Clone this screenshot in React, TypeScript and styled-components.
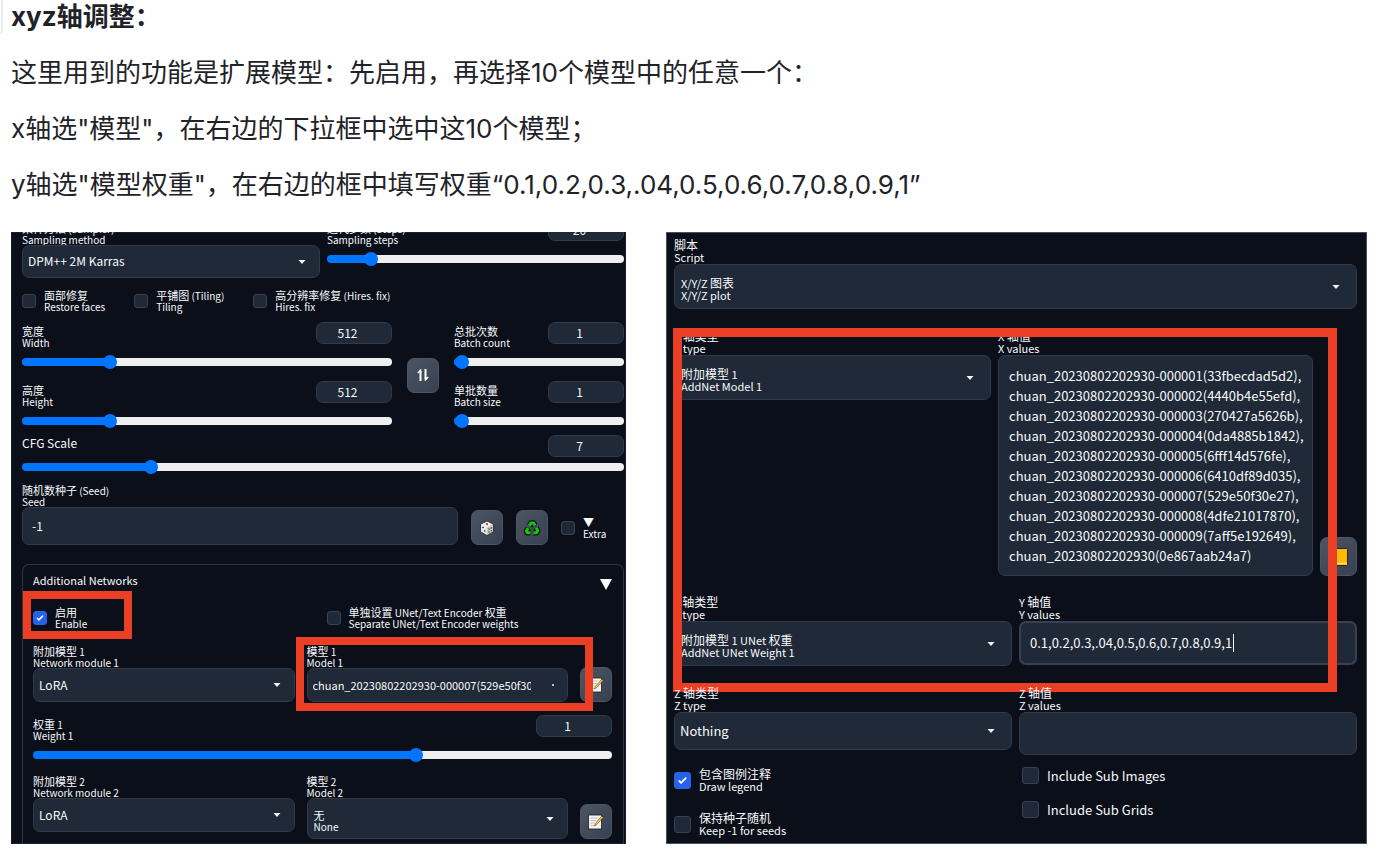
import React, { useId } from "react";
import styled, { createGlobalStyle, css } from "styled-components";

const GlobalStyle = createGlobalStyle`
  *, *::before, *::after { box-sizing: border-box; }
  body {
    margin: 0;
    background: #fff;
    color: #1f2329;
    font-family: Inter, "Noto Sans CJK SC", sans-serif;
  }
  button, input, select, textarea { font: inherit; color: inherit; margin: 0; }
`;

const uiFont = `"Noto Sans CJK SC", sans-serif`;

/* ---------- article ---------- */

const Article = styled.main`
  position: relative;
  padding: 0 17px 11px 11px;
`;

const EdgeTab = styled.span`
  position: absolute;
  left: 0;
  top: 0;
  width: 3px;
  height: 34px;
  border-right: 2px solid #e9eaeb;
  border-bottom-right-radius: 4px;
`;

const Copy = styled.div`
  display: flex;
  flex-direction: column;
  gap: 22px;
  margin-bottom: 30px;
  font-size: 26px;
  line-height: 34px;
`;

const Title = styled.h3`
  margin: 0;
  font-size: 26px;
  font-weight: 700;
`;

const Paragraph = styled.p`
  margin: 0;
`;

const Figures = styled.div`
  display: grid;
  grid-template-columns: 615fr 701fr;
  gap: 40px;
`;

/* ---------- panel ---------- */

const Panel = styled.section<{ $large?: boolean }>`
  position: relative;
  overflow: hidden;
  background: #0b0f19;
  color: #f8f9fb;
  font-family: ${uiFont};
  font-size: ${(p) => (p.$large ? 13 : 12)}px;
  line-height: 16px;
  box-shadow: inset 0 0 0 1px ${(p) => (p.$large ? "#4b4f58" : "#1b1f29")};
  padding: ${(p) => (p.$large ? "6px 10px 0 8px" : "0 2px 0 11px")};
  --zh: ${(p) => (p.$large ? 12 : 11)}px;
  --en: ${(p) => (p.$large ? 11 : 10)}px;
  --lh: ${(p) => (p.$large ? 13 : 11)}px;
  --box: ${(p) => (p.$large ? 17 : 14)}px;
  --arrow: ${(p) => (p.$large ? 16 : 13)}px;
`;

const Stack = styled.div<{ $gap: number }>`
  display: flex;
  flex-direction: column;
  gap: ${(p) => p.$gap}px;
`;

const Columns = styled.div<{ $cols: string; $gap: number }>`
  position: relative;
  display: grid;
  grid-template-columns: ${(p) => p.$cols};
  gap: ${(p) => p.$gap}px;
  align-items: start;
`;

const LabelLine = styled.span<{ $latin?: boolean }>`
  display: block;
  white-space: nowrap;
  height: var(--lh);
  line-height: var(--lh);
  font-size: ${(p) => (p.$latin ? "var(--en)" : "var(--zh)")};
`;

const Latin = styled.span`
  font-size: var(--en);
`;

function TwoLine({ zh, en }: { zh: string; en: string }) {
  return (
    <>
      <LabelLine>
        {zh.split(/([\x20-\x7e]+)/).map((part, i) =>
          /^[\x20-\x7e]+$/.test(part) ? <Latin key={i}>{part}</Latin> : part
        )}
      </LabelLine>
      <LabelLine $latin>{en}</LabelLine>
    </>
  );
}

const FieldLabel = styled.label`
  display: block;
`;

const surface = css`
  background: #1f2937;
  border: 1px solid #303a49;
  border-radius: 7px;
`;

/* ---------- select ---------- */

const SelectBox = styled.div<{ $h: number }>`
  ${surface}
  position: relative;
  display: flex;
  align-items: center;
  height: ${(p) => p.$h}px;
`;

const NativeSelect = styled.select<{ $long?: boolean }>`
  appearance: none;
  width: 100%;
  height: 100%;
  padding: 0 ${(p) => (p.$long ? 36 : 34)}px 1px 5px;
  border: 0;
  background: transparent;
  outline: 0;
  white-space: nowrap;
  overflow: hidden;
  ${(p) => p.$long && css`font-size: 11px;`}
`;

const SelectedText = styled.span`
  position: absolute;
  left: 6px;
  padding-top: 4px;
  pointer-events: none;
`;

const Caret = styled.svg`
  position: absolute;
  right: var(--arrow);
  width: 8px;
  height: 4px;
  fill: #f3f4f6;
  pointer-events: none;
`;

type SelectProps = { zh: string; en: string; h: number; value?: string; two?: [string, string]; long?: boolean };

function SelectField({ zh, en, h, value, two, long }: SelectProps) {
  const id = useId();
  return (
    <div>
      <FieldLabel htmlFor={id}>
        <TwoLine zh={zh} en={en} />
      </FieldLabel>
      <SelectBox $h={h}>
        <NativeSelect id={id} $long={long}>
          {two ? <option aria-label={two[1]} /> : <option>{value}</option>}
        </NativeSelect>
        {two && (
          <SelectedText>
            <TwoLine zh={two[0]} en={two[1]} />
          </SelectedText>
        )}
        {long ? (
          <Caret viewBox="0 0 8 4">
            <circle cx="7" cy="2" r="1" />
          </Caret>
        ) : (
          <Caret viewBox="0 0 8 4">
            <path d="M0.500 0h7L4 4z" />
          </Caret>
        )}
      </SelectBox>
    </div>
  );
}

/* ---------- slider ---------- */

const SliderHead = styled.div`
  display: flex;
  justify-content: space-between;
  align-items: flex-start;
`;

const SliderLabel = styled.label<{ $single?: boolean }>`
  padding-top: ${(p) => (p.$single ? 0 : 4)}px;
`;

const NumberBox = styled.input`
  ${surface}
  width: 76px;
  height: 22px;
  padding: 0 13px 1px 0;
  text-align: center;
  appearance: textfield;
  &::-webkit-inner-spin-button { appearance: none; }
`;

const Range = styled.input<{ $fill: number; $top: number }>`
  appearance: none;
  display: block;
  width: 100%;
  height: 14px;
  margin-top: ${(p) => p.$top}px;
  background: transparent;
  &::-webkit-slider-runnable-track {
    height: 8px;
    border: 1px solid transparent;
    border-radius: 4px;
    background: linear-gradient(to right, #0075ff ${(p) => p.$fill}%, #efefef ${(p) => p.$fill}%) border-box;
  }
  &::-webkit-slider-thumb {
    appearance: none;
    width: 14px;
    height: 14px;
    margin-top: -4px;
    border-radius: 50%;
    background: #0075ff;
  }
`;

type SliderProps = { zh?: string; en: string; min: number; max: number; value: number };

function SliderField({ zh, en, min, max, value }: SliderProps) {
  const id = useId();
  const fill = ((value - min) / (max - min)) * 100;
  return (
    <div>
      <SliderHead>
        <SliderLabel htmlFor={id} $single={!zh}>
          {zh ? <TwoLine zh={zh} en={en} /> : en}
        </SliderLabel>
        <NumberBox type="number" aria-label={en} defaultValue={value} />
      </SliderHead>
      <Range
        id={id}
        type="range"
        min={min}
        max={max}
        defaultValue={value}
        $fill={Math.max(fill, 3)}
        $top={zh ? 7 : 3}
      />
    </div>
  );
}

/* ---------- checkbox ---------- */

const CheckLabel = styled.label`
  display: flex;
  align-items: center;
  gap: 8px;
  white-space: nowrap;
`;

const CheckInput = styled.input`
  appearance: none;
  flex: none;
  width: var(--box);
  height: var(--box);
  border: 1px solid #374151;
  border-radius: 3px;
  background: #1f2937;
  &:checked {
    border-color: #2563eb;
    background: #2563eb
      url("data:image/svg+xml,%3Csvg viewBox='0 0 16 16' fill='white' xmlns='http://www.w3.org/2000/svg'%3E%3Cpath d='M12.2 4.8a1 1 0 0 1 0 1.4l-5 5a1 1 0 0 1-1.4 0l-2-2a1 1 0 0 1 1.4-1.4L6.5 9.1l4.3-4.3a1 1 0 0 1 1.4 0z'/%3E%3C/svg%3E");
  }
`;

function Check({ zh, en, checked }: { zh?: string; en: string; checked?: boolean }) {
  return (
    <CheckLabel>
      <CheckInput type="checkbox" defaultChecked={checked} />
      <span>{zh ? <TwoLine zh={zh} en={en} /> : en}</span>
    </CheckLabel>
  );
}

const CheckRow = styled.div`
  display: flex;
  gap: 29px;
`;

/* ---------- buttons and icons ---------- */

const ToolButton = styled.button<{ $large?: boolean }>`
  display: flex;
  align-items: center;
  justify-content: center;
  width: ${(p) => (p.$large ? 37 : 32)}px;
  height: ${(p) => (p.$large ? 39 : 35)}px;
  padding: 0;
  border: 1px solid #4b5563;
  border-radius: 7px;
  background: linear-gradient(to bottom right, #4b5563, #374151);
`;

const EndButton = styled(ToolButton)`
  align-self: end;
`;

const CenterButton = styled(ToolButton)`
  align-self: center;
`;

const SwapIcon = () => (
  <svg width="14" height="12" viewBox="0 0 14 12" fill="none" stroke="#fff" strokeWidth="2" aria-hidden>
    <path d="M4.500 12V2M9.500 0v10" />
    <path d="M1.800 4l2.700-2.800V4M12.200 8L9.500 10.800V8" strokeWidth="1.500" />
  </svg>
);

const DiceIcon = () => (
  <svg width="16" height="16" viewBox="0 0 16 16" aria-hidden>
    <path d="M8 1l6 3v7.500l-6 3.500-6-3.500V4z" fill="#f4f4f4" stroke="#222" strokeWidth="0.800" />
    <path d="M8 7.500l6-3.500v7.500L8 15z" fill="#c9c9c9" />
    <path d="M8 7.500L2 4v7.500L8 15z" fill="#e6e6e6" />
    <circle cx="8" cy="4.200" r="1.100" fill="#d4283a" />
    <circle cx="4" cy="7.500" r="0.800" fill="#222" />
    <circle cx="5.800" cy="11" r="0.800" fill="#222" />
    <circle cx="10" cy="9" r="0.700" fill="#222" />
    <circle cx="12.300" cy="8" r="0.700" fill="#222" />
    <circle cx="10" cy="12" r="0.700" fill="#222" />
    <circle cx="12.300" cy="10.600" r="0.700" fill="#222" />
  </svg>
);

const RecycleIcon = () => (
  <svg width="18" height="18" viewBox="0 0 18 18" fill="none" aria-hidden>
    <g stroke="#071507" strokeWidth="5.500" strokeLinejoin="round">
      <path d="M6.200 6.800L8 4h2.500L12 6.500" />
      <path d="M13.200 8.800l1.600 3-1.300 2H10.500" />
      <path d="M7.500 13.800H4.300L3.400 12 5 9.200" />
    </g>
    <g stroke="#16c60c" strokeWidth="3" strokeLinejoin="round">
      <path d="M6.200 6.800L8 4h2.500L12 6.500" />
      <path d="M13.200 8.800l1.600 3-1.300 2H10.500" />
      <path d="M7.500 13.800H4.300L3.400 12 5 9.200" />
    </g>
  </svg>
);

const MemoIcon = () => (
  <svg width="18" height="18" viewBox="0 0 18 18" aria-hidden>
    <path d="M1.500 2h13v14h-13z" fill="#f3f3f3" stroke="#1b1b1b" strokeWidth="0.800" />
    <path d="M3.500 5h7M3.500 7.500h6M3.500 10h4M3.500 12.500h4" stroke="#b9b9b9" strokeWidth="0.900" />
    <path d="M7.500 13l0.800-2.500L14.800 3l1.500 1.200L9.800 11.600z" fill="#f3c04a" stroke="#4a3a10" strokeWidth="0.500" />
    <path d="M14.500 3l1-1 2 1.500-1 1.100z" fill="#3c3c3c" />
  </svg>
);

const NoteIcon = () => (
  <svg width="18" height="18" viewBox="0 0 18 18" aria-hidden>
    <rect x="0.500" y="0.500" width="17" height="17" rx="1" fill="#ffb900" stroke="#2b2410" />
    <path d="M1 15.500h16" stroke="#ffe08a" strokeWidth="1.500" />
  </svg>
);

/* ---------- red frames drawn over the screenshots ---------- */

const Frame = styled.span<{ $inset: string; $w: number }>`
  position: absolute;
  inset: ${(p) => p.$inset};
  border: ${(p) => p.$w}px solid #ea3f24;
  pointer-events: none;
`;

const Framed = styled.div`
  position: relative;
`;

const FramedCheck = styled.div`
  position: relative;
  width: 84px;
`;

/* ---------- left panel ---------- */

const LeftBody = styled.div`
  margin-top: -13px;
`;

const Pad = styled.div<{ $top: number }>`
  padding-top: ${(p) => p.$top}px;
`;

const SeedRow = styled.div`
  display: flex;
  align-items: flex-end;
  gap: 13px;
`;

const SeedField = styled.div`
  flex: 1;
`;

const TextInput = styled.input<{ $h: number; $active?: boolean }>`
  ${surface}
  display: block;
  width: 100%;
  height: ${(p) => p.$h}px;
  padding: 0 9px 2px;
  outline: 0;
  ${(p) => p.$active && css`border: 2px solid #374151;`}
`;

const SeedTools = styled.div`
  display: flex;
  align-items: center;
  gap: 13px;
  width: 153px;
`;

const Accordion = styled.div`
  margin-top: 19px;
  padding: 7px 11px 5px 10px;
  border: 1px solid #2f3643;
  border-bottom: 0;
  border-radius: 7px 7px 0 0;
`;

const AccordionHead = styled.button`
  display: flex;
  justify-content: space-between;
  width: 100%;
  height: 18px;
  padding: 0;
  border: 0;
  background: none;
  font-size: 11px;
`;

const Triangle = styled.svg`
  align-self: flex-end;
  width: 12px;
  height: 11px;
  fill: #fff;
`;

function GenerationPanel() {
  const seedId = useId();
  return (
    <Panel>
      <LeftBody>
        <Columns $cols="298fr 297fr" $gap={7}>
          <Pad $top={4}>
            <SelectField zh="采样方法 (Sampler)" en="Sampling method" value="DPM++ 2M Karras" h={33} />
          </Pad>
          <SliderField zh="迭代步数 (Steps)" en="Sampling steps" min={1} max={150} value={20} />
        </Columns>
        <Pad $top={12}>
          <CheckRow>
            <Check zh="面部修复" en="Restore faces" />
            <Check zh="平铺图 (Tiling)" en="Tiling" />
            <Check zh="高分辨率修复 (Hires. fix)" en="Hires. fix" />
          </CheckRow>
        </Pad>
        <Pad $top={10}>
          <Columns $cols="370fr 32px 170fr" $gap={15}>
            <Stack $gap={12}>
              <SliderField zh="宽度" en="Width" min={64} max={2048} value={512} />
              <SliderField zh="高度" en="Height" min={64} max={2048} value={512} />
            </Stack>
            <CenterButton aria-label="Swap width and height">
              <SwapIcon />
            </CenterButton>
            <Stack $gap={12}>
              <SliderField zh="总批次数" en="Batch count" min={1} max={100} value={1} />
              <SliderField zh="单批数量" en="Batch size" min={1} max={8} value={1} />
            </Stack>
          </Columns>
        </Pad>
        <Pad $top={7}>
          <SliderField en="CFG Scale" min={1} max={30} value={7} />
        </Pad>
        <Pad $top={11}>
          <SeedRow>
            <SeedField>
              <FieldLabel htmlFor={seedId}>
                <TwoLine zh="随机数种子 (Seed)" en="Seed" />
              </FieldLabel>
              <TextInput id={seedId} $h={38} defaultValue="-1" />
            </SeedField>
            <SeedTools>
              <ToolButton aria-label="Random seed">
                <DiceIcon />
              </ToolButton>
              <ToolButton aria-label="Reuse seed">
                <RecycleIcon />
              </ToolButton>
              <Check zh="▼" en="Extra" />
            </SeedTools>
          </SeedRow>
        </Pad>
        <Accordion>
          <AccordionHead>
            Additional Networks
            <Triangle viewBox="0 0 12 11">
              <path d="M0 0h12L6 11z" />
            </Triangle>
          </AccordionHead>
          <Pad $top={17}>
            <Columns $cols="1fr 1fr" $gap={8}>
              <FramedCheck>
                <Check zh="启用" en="Enable" checked />
                <Frame $inset="-16px -15px -10px -10px" $w={8} />
              </FramedCheck>
              <Check zh="单独设置 UNet/Text Encoder 权重" en="Separate UNet/Text Encoder weights" />
            </Columns>
          </Pad>
          <Pad $top={17}>
            <Columns $cols="1fr 1fr 32px" $gap={12}>
              <SelectField zh="附加模型 1" en="Network module 1" value="LoRA" h={34} />
              <SelectField zh="模型 1" en="Model 1" value="chuan_20230802202930-000007(529e50f30e27)" h={34} long />
              <EndButton aria-label="Edit model 1 metadata">
                <MemoIcon />
              </EndButton>
              <Frame $inset="-9px 19px -9px calc(50% - 27px)" $w={8} />
            </Columns>
          </Pad>
          <Pad $top={13}>
            <SliderField zh="权重 1" en="Weight 1" min={-1} max={2} value={1} />
          </Pad>
          <Pad $top={14}>
            <Columns $cols="1fr 1fr 32px" $gap={12}>
              <SelectField zh="附加模型 2" en="Network module 2" value="LoRA" h={34} />
              <SelectField zh="模型 2" en="Model 2" two={["无", "None"]} h={41} />
              <EndButton aria-label="Edit model 2 metadata">
                <MemoIcon />
              </EndButton>
            </Columns>
          </Pad>
        </Accordion>
      </LeftBody>
    </Panel>
  );
}

/* ---------- right panel ---------- */

const ValuesArea = styled.textarea`
  ${surface}
  display: block;
  width: 100%;
  height: 221px;
  padding: 10px;
  line-height: 20px;
  resize: none;
  overflow: hidden;
  white-space: pre;
  outline: 0;
`;

const TextCursor = styled.span`
  position: absolute;
  left: 214px;
  bottom: 13px;
  width: 1px;
  height: 18px;
  background: #f3f4f6;
`;

const SubChecks = styled(Stack)`
  padding-left: 3px;
`;

const modelHashes = [
  "-000001(33fbecdad5d2),",
  "-000002(4440b4e55efd),",
  "-000003(270427a5626b),",
  "-000004(0da4885b1842),",
  "-000005(6fff14d576fe),",
  "-000006(6410df89d035),",
  "-000007(529e50f30e27),",
  "-000008(4dfe21017870),",
  "-000009(7aff5e192649),",
  "(0e867aab24a7)",
];

const modelList = modelHashes.map((h) => "chuan_20230802202930" + h).join("\n");

function ScriptPanel() {
  const xId = useId();
  const yId = useId();
  const zId = useId();
  return (
    <Panel $large>
      <Stack $gap={20}>
        <SelectField zh="脚本" en="Script" two={["X/Y/Z 图表", "X/Y/Z plot"]} h={45} />
        <Framed>
          <Stack $gap={19}>
            <Columns $cols="317fr 315fr 37px" $gap={7}>
              <SelectField zh="X 轴类型" en="X type" two={["附加模型 1", "AddNet Model 1"]} h={45} />
              <div>
                <FieldLabel htmlFor={xId}>
                  <TwoLine zh="X 轴值" en="X values" />
                </FieldLabel>
                <ValuesArea id={xId} defaultValue={modelList} spellCheck={false} />
              </div>
              <EndButton $large aria-label="Fill X values">
                <NoteIcon />
              </EndButton>
            </Columns>
            <Columns $cols="1fr 1fr" $gap={7}>
              <SelectField zh="Y 轴类型" en="Y type" two={["附加模型 1 UNet 权重", "AddNet UNet Weight 1"]} h={45} />
              <Framed>
                <FieldLabel htmlFor={yId}>
                  <TwoLine zh="Y 轴值" en="Y values" />
                </FieldLabel>
                <TextInput id={yId} $h={44} $active defaultValue="0.1,0.2,0.3,.04,0.5,0.6,0.7,0.8,0.9,1" />
                <TextCursor />
              </Framed>
            </Columns>
          </Stack>
          <Frame $inset="-1px 20px -26px -1px" $w={9} />
        </Framed>
        <Stack $gap={12}>
          <Columns $cols="1fr 1fr" $gap={7}>
            <SelectField zh="Z 轴类型" en="Z type" value="Nothing" h={38} />
            <div>
              <FieldLabel htmlFor={zId}>
                <TwoLine zh="Z 轴值" en="Z values" />
              </FieldLabel>
              <TextInput id={zId} $h={43} />
            </div>
          </Columns>
          <Columns $cols="1fr 1fr" $gap={7}>
            <Stack $gap={18}>
              <Check zh="包含图例注释" en="Draw legend" checked />
              <Check zh="保持种子随机" en="Keep -1 for seeds" />
            </Stack>
            <SubChecks $gap={17}>
              <Check en="Include Sub Images" />
              <Check en="Include Sub Grids" />
            </SubChecks>
          </Columns>
        </Stack>
      </Stack>
    </Panel>
  );
}

export default function App() {
  return (
    <>
      <GlobalStyle />
      <Article>
        <EdgeTab />
        <Copy>
          <Title>xyz轴调整：</Title>
          <Paragraph>这里用到的功能是扩展模型：先启用，再选择10个模型中的任意一个：</Paragraph>
          <Paragraph>x轴选"模型"，在右边的下拉框中选中这10个模型；</Paragraph>
          <Paragraph>y轴选"模型权重"，在右边的框中填写权重“0.1,0.2,0.3,.04,0.5,0.6,0.7,0.8,0.9,1”</Paragraph>
        </Copy>
        <Figures>
          <GenerationPanel />
          <ScriptPanel />
        </Figures>
      </Article>
    </>
  );
}
